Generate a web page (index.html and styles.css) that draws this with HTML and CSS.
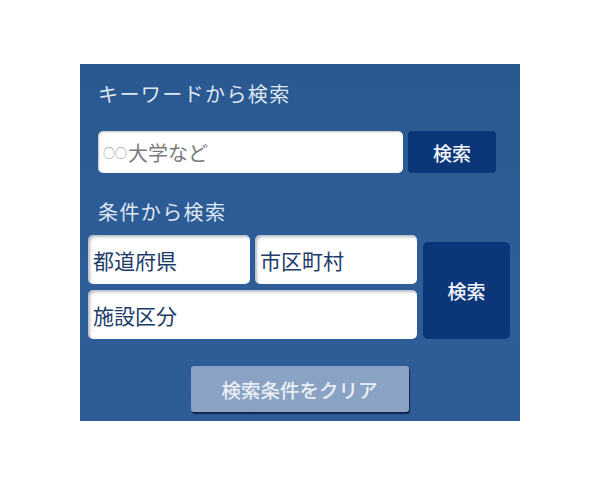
FILE: index.html
```html
<!DOCTYPE html>
<html lang="ja">
<head>
<meta charset="utf-8">
<link rel="stylesheet" href="styles.css">
</head>
<body>
<div class="panel">
  <h2 class="title">キーワードから検索</h2>
  <div class="kw-row">
    <div class="kw-input"><span class="circ">○○</span>大学など</div>
    <button class="btn-search">検索</button>
  </div>
  <h2 class="title title2">条件から検索</h2>
  <div class="cond">
    <div class="sel">都道府県</div>
    <div class="sel">市区町村</div>
    <button class="btn-search btn-tall">検索</button>
    <div class="sel sel-wide">施設区分</div>
  </div>
  <div class="clear-wrap">
    <button class="btn-clear">検索条件をクリア</button>
  </div>
</div>
</body>
</html>
```

FILE: styles.css
```css
* { box-sizing: border-box; }
html, body { margin: 0; background: #fff; }
body {
  padding: 64px 0 0 80px;
  font-family: "Noto Sans CJK JP", "Noto Sans", sans-serif;
}
.panel {
  width: 440px;
  height: 357px;
  background: linear-gradient(180deg, #2a5891 0%, #2f5d97 60%, #2e5c96 100%);
  display: flex;
  flex-direction: column;
}
.title {
  margin: 17px 0 0 18px;
  font-size: 20px;
  letter-spacing: 1.4px;
  line-height: 25px;
  font-weight: 400;
  color: #dfe7f1;
}
.title2 { margin-top: 26px; }
.kw-row {
  margin: 25px 0 0 18px;
  display: flex;
  gap: 5px;
}
.kw-input {
  width: 305px;
  height: 42px;
  background: #fff;
  border-radius: 5px;
  box-shadow: inset 1px 1px 2px rgba(0,0,0,0.25);
  padding-left: 5px;
  display: flex;
  align-items: center;
  font-size: 20px;
  color: #7a7a7a;
}
.circ { font-size: 12px; margin-right: 1px; color: #8a8a8a; }
.btn-search {
  width: 88px;
  height: 42px;
  border: none;
  border-radius: 4px;
  background: #0b377a;
  color: #f2f5fa;
  font-family: inherit;
  font-size: 19px;
  font-weight: 500;
  padding: 0;
}
.cond {
  margin: 11px 0 0 8px;
  display: grid;
  grid-template-columns: 162px 162px 88px;
  grid-template-rows: 49px 49px;
  column-gap: 5px;
  row-gap: 6px;
}
.sel {
  background: #fff;
  border-radius: 5px;
  box-shadow: inset 2px 2px 3px rgba(40,60,90,0.35);
  display: flex;
  align-items: center;
  padding-left: 5px;
  font-size: 21px;
  color: #1d3c6a;
}
.sel-wide { grid-column: 1 / 3; grid-row: 2; }
.btn-tall {
  grid-column: 3;
  grid-row: 1 / 3;
  height: 97px;
  width: 87px;
  align-self: end;
  margin-left: 1px;
  border-radius: 5px;
}
.clear-wrap {
  margin-top: 27px;
  display: flex;
  justify-content: center;
}
.btn-clear {
  width: 218px;
  height: 46px;
  margin-left: -1px;
  border: none;
  border-radius: 3px;
  background: #8aa3c5;
  color: #eaeff6;
  font-family: inherit;
  font-size: 19.5px;
  font-weight: 500;
  padding: 0;
  box-shadow: 1px 2px 1px #10264a;
}
```
